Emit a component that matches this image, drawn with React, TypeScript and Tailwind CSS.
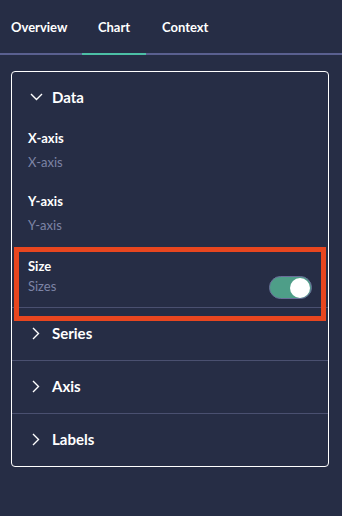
import React from 'react';

const font = { fontFamily: 'Lato, "Open Sans", Arial, sans-serif' };

function ChevronDown() {
  return (
    <svg width="13" height="8" viewBox="0 0 13 8" fill="none" className="shrink-0">
      <path d="M1 1l5.5 5.5L12 1" stroke="white" strokeWidth="1.4" />
    </svg>
  );
}

function ChevronRight() {
  return (
    <svg width="8" height="13" viewBox="0 0 8 13" fill="none" className="shrink-0">
      <path d="M1 1l5.5 5.5L1 12" stroke="white" strokeWidth="1.4" />
    </svg>
  );
}

function Field({ label, value }: { label: string; value: string }) {
  return (
    <div>
      <div className="text-[13px] font-bold leading-4 text-white">{label}</div>
      <div className="mt-2 text-[13px] leading-4 text-[#7d84a6]">{value}</div>
    </div>
  );
}

function Collapsed({ title }: { title: string }) {
  return (
    <div className="flex h-[53px] items-center border-t border-[#4a5070] pb-[2px] pl-[20px]">
      <ChevronRight />
      <span className="ml-[12px] text-[15px] font-bold text-white">{title}</span>
    </div>
  );
}

export default function App() {
  return (
    <div className="h-[516px] w-[342px] bg-[#262d45]" style={font}>
      <div className="flex h-[55px] items-center border-b-2 border-[#5a6090] pt-[2px] text-[13px] font-bold text-white">
        <div className="flex h-full w-[82px] items-center pl-[11px]">Overview</div>
        <div className="relative flex h-full w-[64px] items-center justify-center">
          Chart
          <div className="absolute -bottom-[2px] left-0 h-[2px] w-full bg-[#4cbfa6]" />
        </div>
        <div className="flex h-full items-center pl-[16px]">Context</div>
      </div>

      <div className="relative ml-[11px] mt-[16px] w-[318px] rounded-[4px] border border-white">
        <div className="flex h-[50px] items-center pl-[18px]">
          <ChevronDown />
          <span className="ml-[9px] text-[15px] font-bold text-white">Data</span>
        </div>
        <div className="pl-[16px] pr-[16px]">
          <div className="mt-[8px]">
            <Field label="X-axis" value="X-axis" />
          </div>
          <div className="mt-[23px]">
            <Field label="Y-axis" value="Y-axis" />
          </div>
          <div className="mt-[25px] flex items-end justify-between pb-[8px]">
            <div className="mb-[5px]">
              <div className="text-[13px] font-bold leading-4 text-white">Size</div>
              <div className="mt-1 text-[13px] leading-4 text-[#7d84a6]">Sizes</div>
            </div>
            <div className="flex h-[23px] w-[43px] items-center justify-end rounded-full border border-[#6a6d9a] bg-[#4e9e88] pr-[1px]">
              <div className="h-[20px] w-[20px] rounded-full bg-white" />
            </div>
          </div>
        </div>
        <Collapsed title="Series" />
        <Collapsed title="Axis" />
        <Collapsed title="Labels" />

        <div className="absolute left-[2px] top-[175px] h-[74px] w-[312px] border-[5px] border-[#e8461f]" />
      </div>
    </div>
  );
}
